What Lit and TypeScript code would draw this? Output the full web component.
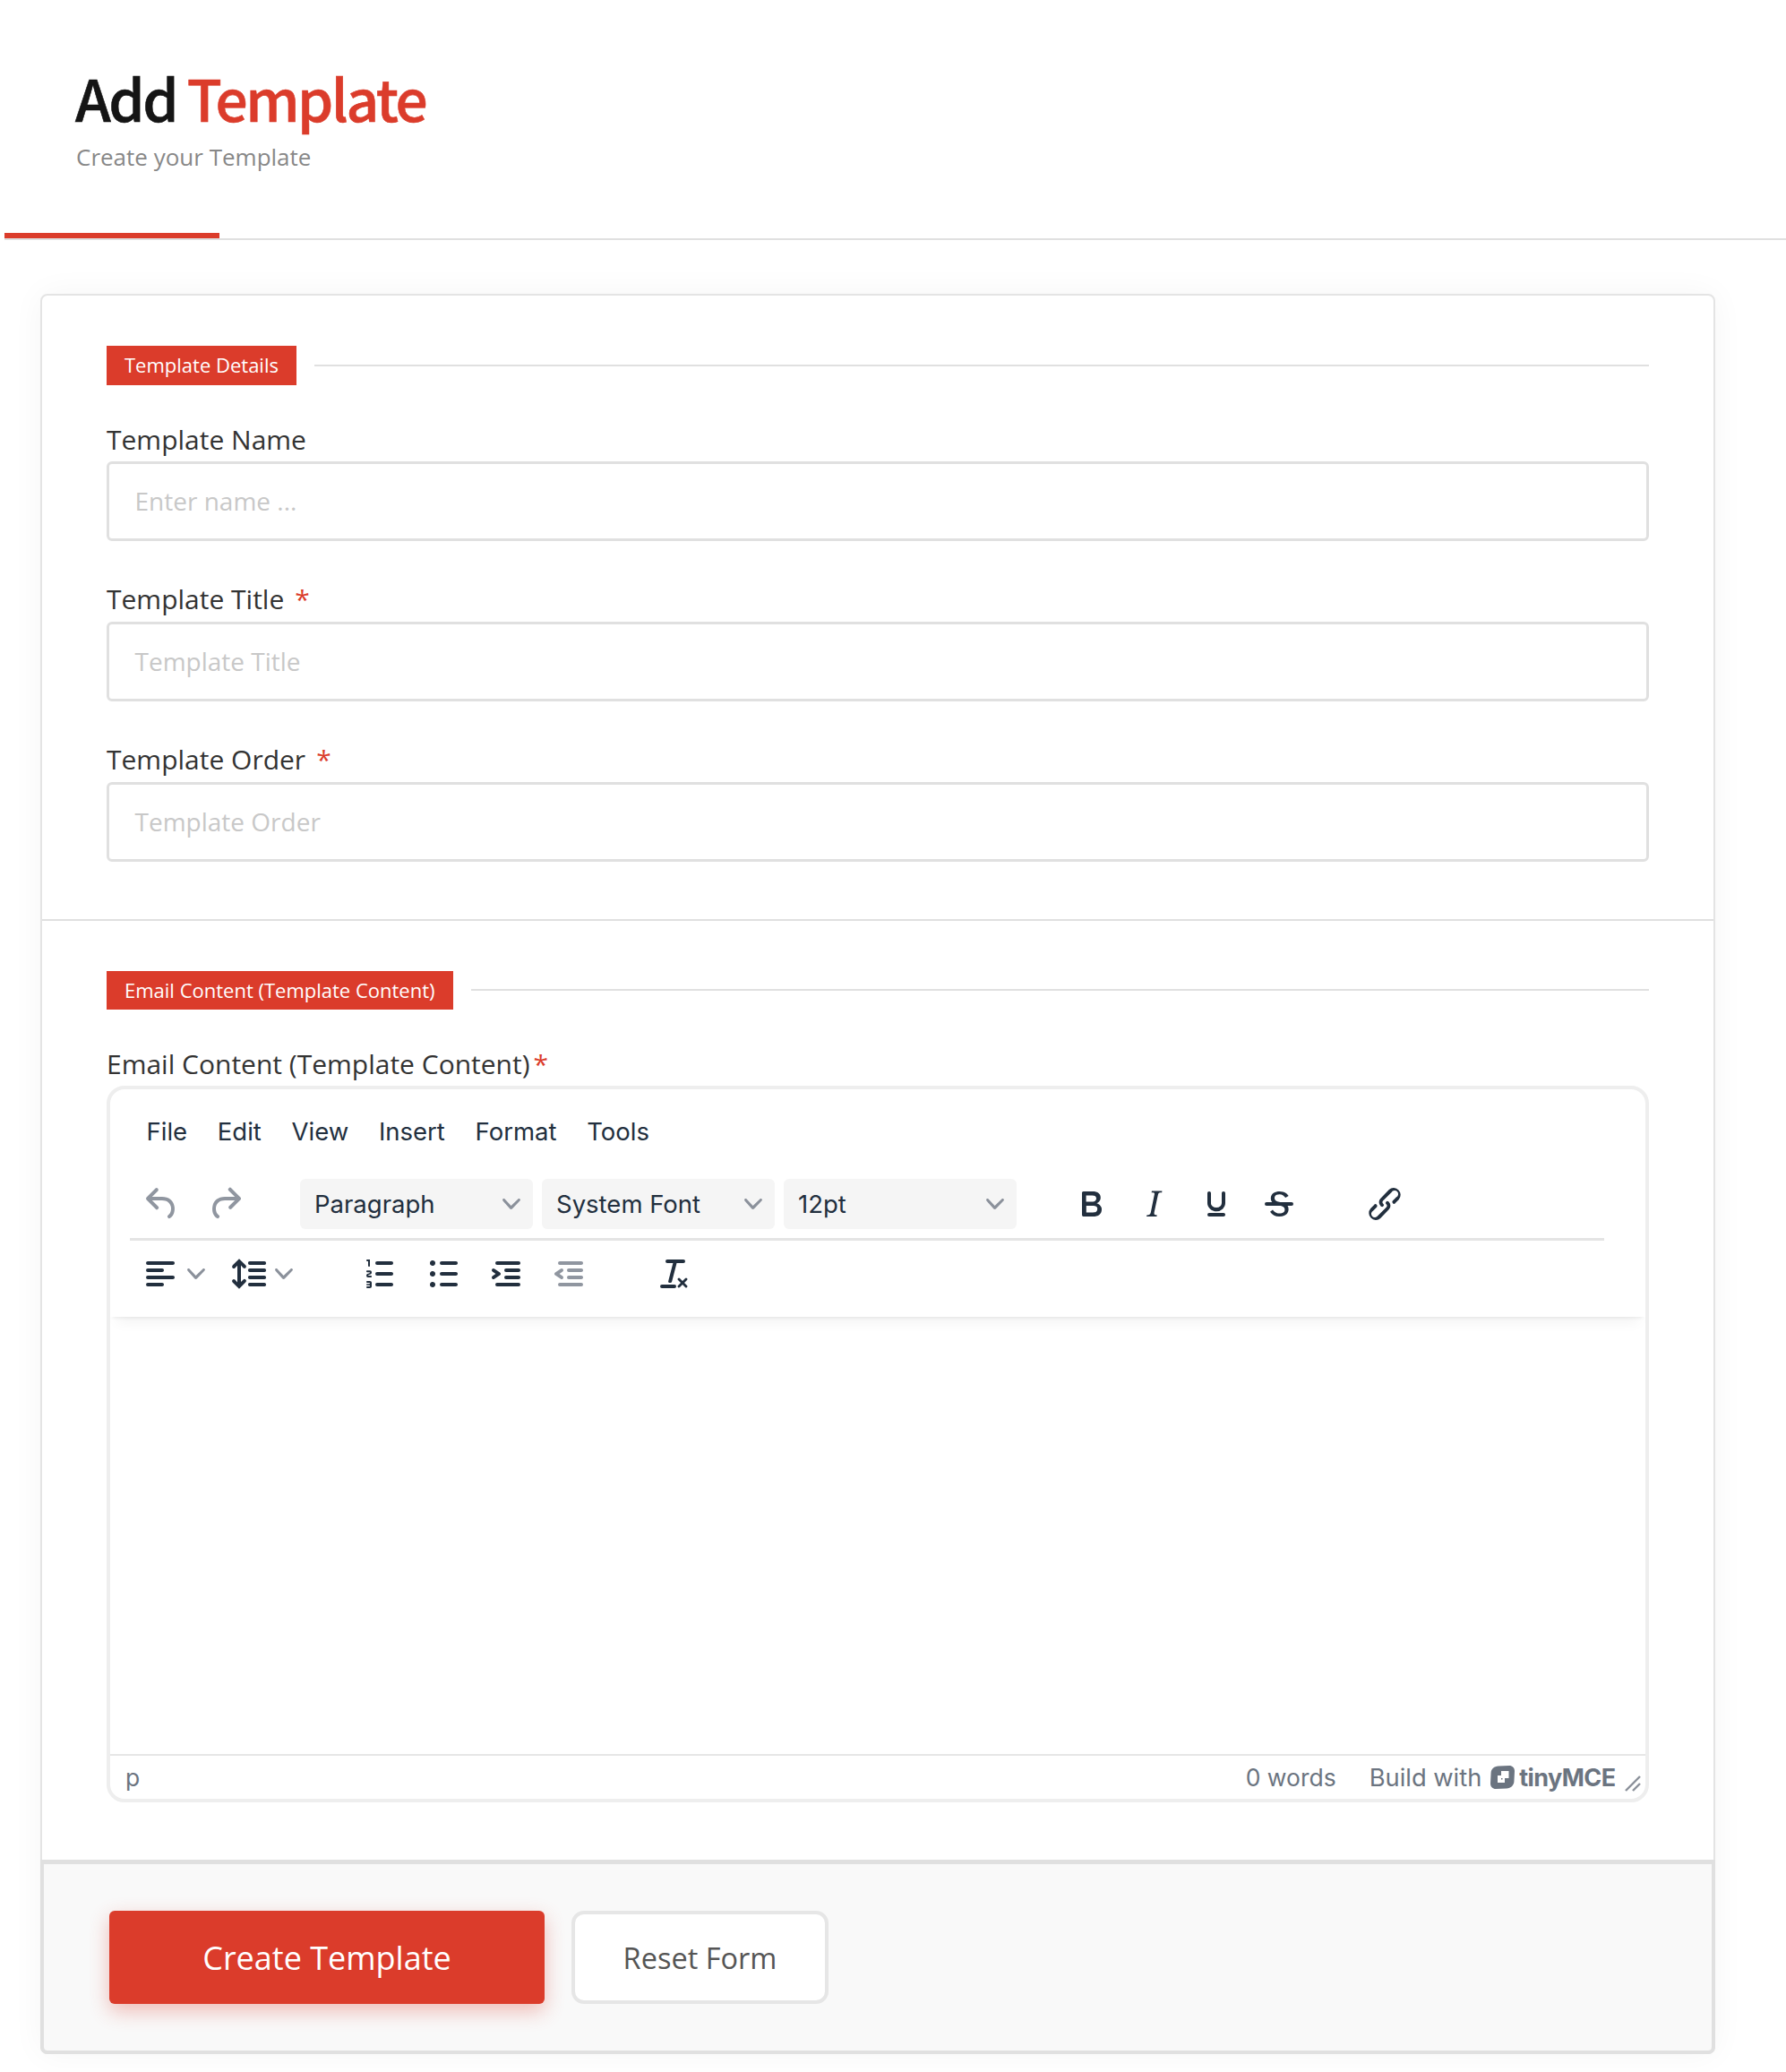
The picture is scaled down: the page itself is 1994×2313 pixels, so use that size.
import { LitElement, html, css, svg } from "lit";
import { customElement } from "lit/decorators.js";

const P: Record<string, string> = {
  undo: "M6.4 8H12c3.7 0 6.2 2 6.8 5.1.6 2.7-.4 5.6-2.3 6.8a1 1 0 01-1-1.8c1.1-.6 1.8-2.7 1.4-4.6-.5-2.1-2.1-3.5-4.9-3.5H6.4l3.3 3.3a1 1 0 11-1.4 1.4l-5-5a1 1 0 010-1.4l5-5a1 1 0 011.4 1.4L6.4 8z",
  redo: "M17.6 10H12c-2.8 0-4.4 1.4-4.9 3.5-.4 2 .3 4 1.4 4.6a1 1 0 11-1 1.8c-2-1.2-2.9-4.1-2.3-6.8.6-3 3-5.1 6.8-5.1h5.6l-3.3-3.3a1 1 0 111.4-1.4l5 5a1 1 0 010 1.4l-5 5a1 1 0 01-1.4-1.4l3.3-3.3z",
  bold: "M7.8 19c-.3 0-.5 0-.6-.2l-.2-.5V5.7c0-.2 0-.4.2-.5l.6-.2h5c1.5 0 2.7.3 3.5 1 .7.6 1.1 1.4 1.1 2.5a3 3 0 01-.6 1.9c-.4.6-1 1-1.6 1.2.4.1.9.3 1.3.6s.8.7 1 1.2c.4.4.5 1 .5 1.6 0 1.3-.4 2.3-1.3 3-.8.7-2.1 1-3.8 1H7.8zm5-8.3c.6 0 1.2-.1 1.6-.5.4-.3.6-.7.6-1.3 0-1.1-.8-1.7-2.3-1.7H9.3v3.5h3.4zm.5 6c.7 0 1.3-.1 1.7-.4.4-.4.6-.9.6-1.5s-.2-1-.7-1.4c-.4-.3-1-.4-2-.4H9.4v3.8h4z",
  italic: "M16.7 4.7l-.1.9h-.3c-.6 0-1 0-1.4.3-.3.3-.4.6-.5 1.1l-2.1 9.8v.6c0 .5.4.8 1.4.8h.2l-.2.8H8l.2-.8h.2c1.1 0 1.8-.5 2-1.5l2-9.8.1-.5c0-.6-.4-.8-1.4-.8h-.3l.2-.9h5.8z",
  underline: "M16 5c.6 0 1 .4 1 1v5.5a4 4 0 01-.4 1.8l-1 1.4a5.3 5.3 0 01-5.5 1 5 5 0 01-1.6-1c-.5-.4-.8-.9-1.1-1.4a4 4 0 01-.4-1.8V6c0-.6.4-1 1-1s1 .4 1 1v5.5c0 .3 0 .6.2 1l.6.7a3.3 3.3 0 002.2.8 3.4 3.4 0 002.2-.8c.3-.2.4-.5.6-.8l.2-.9V6c0-.6.4-1 1-1zM8 17h8c.6 0 1 .4 1 1s-.4 1-1 1H8a1 1 0 010-2z",
  strike: "M15.6 8.5c-.5-.7-1-1.1-1.3-1.3-.6-.4-1.3-.6-2-.6-2.7 0-2.8 1.7-2.8 2.1 0 1.6 1.8 2 3.2 2.3 4.4.9 4.6 2.8 4.6 3.9 0 1.4-.7 4.1-5 4.1A6.2 6.2 0 017 16.4l1.5-1.1c.4.6 1.6 2 3.5 2 1.5 0 2.6-.4 3-1.2.4-.8.3-2-.8-2.6-.7-.4-1.6-.7-2.9-1-1-.2-3.9-.8-3.9-3.6C7.4 6 9.9 5 12.3 5c2.9 0 4.5 1.5 5 2.5l-1.7 1zM5 11h14a1 1 0 010 2H5a1 1 0 010-2z",
  link: "M6.2 12.3a1 1 0 011.4 1.4l-2 2a2 2 0 102.6 2.8l4.8-4.8a1 1 0 000-1.4 1 1 0 111.4-1.3 2.9 2.9 0 010 4L9.6 20a3.9 3.9 0 01-5.5-5.5l2-2zm11.6-.6a1 1 0 01-1.4-1.4l2-2a2 2 0 10-2.6-2.8L11 10.3a1 1 0 000 1.4A1 1 0 119.6 13a2.9 2.9 0 010-4L14.4 4a3.9 3.9 0 015.5 5.5l-2 2z",
  align: "M5 5h14c.6 0 1 .4 1 1s-.4 1-1 1H5a1 1 0 110-2zm0 4h8c.6 0 1 .4 1 1s-.4 1-1 1H5a1 1 0 110-2zm0 8h8c.6 0 1 .4 1 1s-.4 1-1 1H5a1 1 0 010-2zm0-4h14c.6 0 1 .4 1 1s-.4 1-1 1H5a1 1 0 010-2z",
  lineheight: "M21 5a1 1 0 01.1 2H13a1 1 0 01-.1-2H21zm0 4a1 1 0 01.1 2H13a1 1 0 01-.1-2H21zm0 4a1 1 0 01.1 2H13a1 1 0 01-.1-2H21zm0 4a1 1 0 01.1 2H13a1 1 0 01-.1-2H21zM7 3.6l3.7 3.7a1 1 0 01-1.3 1.5h-.1L8 7.3v9.2l1.3-1.3a1 1 0 011.3 0h.1c.4.4.4 1 0 1.3v.1L7 20.4l-3.7-3.7a1 1 0 011.3-1.5h.1L6 16.7V7.4L4.7 8.7a1 1 0 01-1.3 0h-.1a1 1 0 010-1.3v-.1L7 3.6z",
  numlist: "M10 17h8c.6 0 1 .4 1 1s-.4 1-1 1h-8a1 1 0 010-2zm0-6h8c.6 0 1 .4 1 1s-.4 1-1 1h-8a1 1 0 010-2zm0-6h8c.6 0 1 .4 1 1s-.4 1-1 1h-8a1 1 0 110-2zM6 4v3.5c0 .3-.2.5-.5.5a.5.5 0 01-.5-.5V5h-.5a.5.5 0 010-1H6zm-1 8.8l.2.2h1.3c.3 0 .5.2.5.5s-.2.5-.5.5H4.9a1 1 0 01-.9-1V13c0-.4.3-.8.6-1l1.2-.4.2-.3a.2.2 0 00-.2-.2H4.5a.5.5 0 01-.5-.5c0-.3.2-.5.5-.5h1.6c.5 0 .9.4.9 1v.1c0 .4-.3.8-.6 1l-1.2.4-.2.3zM7 17v2c0 .6-.4 1-1 1H4.5a.5.5 0 010-1h1.2c.2 0 .3-.1.3-.3 0-.2-.1-.3-.3-.3H4.4a.4.4 0 110-.8h1.3c.2 0 .3-.1.3-.3 0-.2-.1-.3-.3-.3H4.5a.5.5 0 110-1H6c.6 0 1 .4 1 1z",
  bullist: "M11 5h8c.6 0 1 .4 1 1s-.4 1-1 1h-8a1 1 0 010-2zm0 6h8c.6 0 1 .4 1 1s-.4 1-1 1h-8a1 1 0 010-2zm0 6h8c.6 0 1 .4 1 1s-.4 1-1 1h-8a1 1 0 010-2zM4.5 6c0-.4.1-.8.4-1 .3-.4.7-.5 1.1-.5.4 0 .8.1 1 .4.4.3.5.7.5 1.1 0 .4-.1.8-.4 1-.3.4-.7.5-1.1.5-.4 0-.8-.1-1-.4-.4-.3-.5-.7-.5-1.1zm0 6c0-.4.1-.8.4-1 .3-.4.7-.5 1.1-.5.4 0 .8.1 1 .4.4.3.5.7.5 1.1 0 .4-.1.8-.4 1-.3.4-.7.5-1.1.5-.4 0-.8-.1-1-.4-.4-.3-.5-.7-.5-1.1zm0 6c0-.4.1-.8.4-1 .3-.4.7-.5 1.1-.5.4 0 .8.1 1 .4.4.3.5.7.5 1.1 0 .4-.1.8-.4 1-.3.4-.7.5-1.1.5-.4 0-.8-.1-1-.4-.4-.3-.5-.7-.5-1.1z",
  indent: "M7 5h12c.6 0 1 .4 1 1s-.4 1-1 1H7a1 1 0 110-2zm5 4h7c.6 0 1 .4 1 1s-.4 1-1 1h-7a1 1 0 010-2zm0 4h7c.6 0 1 .4 1 1s-.4 1-1 1h-7a1 1 0 010-2zm-5 4h12a1 1 0 010 2H7a1 1 0 010-2zm-2.6-3.8L6.2 12l-1.8-1.2a1 1 0 011.2-1.6l3 2a1 1 0 010 1.6l-3 2a1 1 0 11-1.2-1.6z",
  outdent: "M7 5h12c.6 0 1 .4 1 1s-.4 1-1 1H7a1 1 0 110-2zm5 4h7c.6 0 1 .4 1 1s-.4 1-1 1h-7a1 1 0 010-2zm0 4h7c.6 0 1 .4 1 1s-.4 1-1 1h-7a1 1 0 010-2zm-5 4h12a1 1 0 010 2H7a1 1 0 010-2zm1.6-3.8a1 1 0 01-1.2 1.6l-3-2a1 1 0 010-1.6l3-2a1 1 0 011.2 1.6L6.8 12l1.8 1.2z",
  clear: "M13.2 6a1 1 0 010 .2l-2.6 10a1 1 0 01-1 .8h-.2a.8.8 0 01-.8-1l2.6-10H8a1 1 0 110-2h9a1 1 0 010 2h-3.8zM5 18h7a1 1 0 010 2H5a1 1 0 010-2zm13 1.5L16.5 18 15 19.5a.7.7 0 01-1-1l1.5-1.5-1.5-1.5a.7.7 0 011-1l1.5 1.5 1.5-1.5a.7.7 0 011 1L17.5 17l1.5 1.5a.7.7 0 01-1 1z",
};

const icon = (n: string, off = false) => html`<svg class="ic ${off ? "off" : ""}" viewBox="0 0 24 24"><path d="${P[n]}"></path></svg>`;
const chev = () => html`<svg class="chev" viewBox="0 0 10 10"><path d="M8.7 2.2c.3-.3.8-.3 1 0 .4.2.4.7 0 1L5.4 7.8c-.3.3-.9.3-1.2 0L.2 3.2c-.2-.3-.2-.8 0-1 .3-.3.8-.3 1.1 0L4.8 6l3.9-3.8z"></path></svg>`;

@customElement("app-root")
export class AppRoot extends LitElement {
  static styles = css`
    :host { display: block; background: #fff; min-height: 2313px; font-family: "Open Sans", sans-serif; color: #333; }
    * { box-sizing: border-box; }
    .page-head { margin-left: 5px; height: 268px; border-bottom: 2px solid #e0e0e0; display: flex; flex-direction: column; position: relative; }
    .titles { padding: 64px 0 0 79px; flex: 1; }
    h1 { margin: 0; font-family: "Noto Sans CJK SC", "Open Sans", sans-serif; font-size: 64px; line-height: 88px; font-weight: 500; color: #151515; letter-spacing: -2.5px; -webkit-text-stroke: .6px currentColor; }
    h1 span { color: #db3c2b; }
    .sub { font-size: 26px; line-height: 36px; color: #888; padding-left: 1px; margin-top: 4.5px; }
    .tab { width: 240px; height: 6px; background: #db3c2b; }
    .card { width: 1870px; margin: 60px 0 0 45px; border: 2px solid #e4e4e4; border-radius: 8px; background: #fff; box-shadow: 0 0 36px rgba(0,0,0,.045); }
    .sec { padding: 56px 72px 64px; display: flex; flex-direction: column; }
    .sec + .sec { border-top: 2px solid #e0e0e0; }
    .sec-head { display: flex; align-items: center; gap: 20px; margin-bottom: 39px; }
    .badge { height: 43.5px; line-height: 43.5px; padding: 0 20px; background: #db3c2b; color: #fff; font-size: 22px; }
    .rule { flex: 1; height: 2px; background: #e0e0e0; }
    .field + .field { margin-top: 43px; }
    .field + .field label { height: 47px; }
    label { display: block; height: 46px; line-height: 44px; font-size: 30px; color: #333; }
    .req { color: #db3c2b; margin-left: 12px; }
    .req.tight { margin-left: 4px; }
    .input { height: 89px; border: 3px solid #e0e0e0; border-radius: 6px; padding: 0 28.5px; display: flex; align-items: center; font-size: 28px; color: #c8c8c8; }
    .editor { font-family: Inter, sans-serif; border: 4px solid #eee; border-radius: 20px; height: 800px; display: flex; flex-direction: column; overflow: hidden; color: #222f3e; }
    .ed-head { height: 254px; box-shadow: 0 4px 4px -3px rgba(0,0,0,.08), 0 14px 14px -8px rgba(0,0,0,.05); position: relative; display: flex; flex-direction: column; flex: none; }
    .menu { display: flex; gap: 33.7px; padding: 27px 0 0 40.5px; height: 100px; font-size: 27.5px; line-height: 40px; flex: none; }
    .row { display: flex; align-items: center; flex: none; }
    .row1 { height: 56px; padding-left: 34px; }
    .ic { width: 48px; height: 48px; fill: #222f3e; flex: none; }
    .ic.off { fill: #9096a0; }
    .grp { display: flex; gap: 22px; align-items: center; }
    .undo { margin-right: 60px; }
    .marks { margin: 0 70px 0 49px; }
    .sel { width: 260px; height: 56px; border-radius: 6px; background: #f5f5f5; display: flex; align-items: center; justify-content: space-between; padding: 0 14px 0 16px; font-size: 27.5px; margin-right: 10px; }
    .chev { width: 20px; height: 20px; fill: #8b919b; flex: none; }
    .sep { height: 3px; background: #e4e4e4; margin: 10px 46px 0 22px; flex: none; }
    .row2 { height: 56px; margin-top: 9px; padding-left: 32px; }
    .drop { display: flex; align-items: center; gap: 6px; }
    .d1 { margin-right: 24px; }
    .d2 { margin-right: 74px; }
    .lists { margin-right: 70px; }
    .body { flex: 1; }
    .status { height: 50px; border-top: 2px solid #e6e6e6; display: flex; align-items: center; padding: 0 5.5px 0 13px; font-size: 26.5px; color: #6b7480; flex: none; }
    .status .p { flex: 1; padding-left: 4px; }
    .words { margin-right: 37px; }
    .tiny { display: flex; align-items: center; gap: 10px; font-size: 27.3px; }
    .logo { width: 27px; height: 26px; }
    .tiny b { font-size: 27px; font-weight: 700; letter-spacing: -.6px; margin-left: -5px; }
    .grip { width: 18px; height: 18px; margin: 14px 0 0 10px; stroke: #8a9099; stroke-width: 2.4; fill: none; }
    .foot { margin: 0 -2px -2px; height: 217px; background: #f9f9f9; border: 4px solid #e0e0e0; border-top-width: 5px; border-radius: 0 0 8px 8px; padding: 52px 0 0 73px; display: flex; gap: 30px; }
    .btn { height: 104px; display: flex; align-items: center; justify-content: center; border-radius: 6px; }
    .create { width: 486px; background: #db3c2b; color: #fff; font-size: 36px; box-shadow: 0 8px 22px rgba(219,60,43,.32); }
    .reset { width: 287px; background: #fff; color: #555; font-size: 32.5px; border: 4px solid #e6e6e6; border-radius: 14px; }
  `;

  render() {
    return html`
      <div class="page-head">
        <div class="titles">
          <h1>Add <span>Template</span></h1>
          <div class="sub">Create your Template</div>
        </div>
        <div class="tab"></div>
      </div>
      <div class="card">
        <div class="sec">
          <div class="sec-head"><div class="badge">Template Details</div><div class="rule"></div></div>
          <div class="field"><label>Template Name</label><div class="input">Enter name ...</div></div>
          <div class="field"><label>Template Title<span class="req">*</span></label><div class="input">Template Title</div></div>
          <div class="field"><label>Template Order<span class="req">*</span></label><div class="input">Template Order</div></div>
        </div>
        <div class="sec">
          <div class="sec-head"><div class="badge">Email Content (Template Content)</div><div class="rule"></div></div>
          <label>Email Content (Template Content)<span class="req tight">*</span></label>
          <div class="editor">
            <div class="ed-head">
              <div class="menu"><span>File</span><span>Edit</span><span>View</span><span>Insert</span><span>Format</span><span>Tools</span></div>
              <div class="row row1">
                <div class="grp undo">${icon("undo", true)}${icon("redo", true)}</div>
                <div class="sel">Paragraph ${chev()}</div>
                <div class="sel">System Font ${chev()}</div>
                <div class="sel">12pt ${chev()}</div>
                <div class="grp marks">${icon("bold")}${icon("italic")}${icon("underline")}${icon("strike")}</div>
                ${icon("link")}
              </div>
              <div class="sep"></div>
              <div class="row row2">
                <div class="drop d1">${icon("align")}${chev()}</div>
                <div class="drop d2">${icon("lineheight")}${chev()}</div>
                <div class="grp lists">${icon("numlist")}${icon("bullist")}${icon("indent")}${icon("outdent", true)}</div>
                ${icon("clear")}
              </div>
            </div>
            <div class="body"></div>
            <div class="status">
              <span class="p">p</span>
              <span class="words">0 words</span>
              <span class="tiny">Build with
                <svg class="logo" viewBox="0 0 27 26"><path fill="#6b7480" fill-rule="evenodd" d="M9 0.6 L21 0 C24.5 0 27 2.5 27 6 L26.4 18 C26 22 23 25.4 18 25.4 L6 26 C2.5 26 0 23.5 0 20 L0.6 8 C1 3.5 4 1 9 0.6 Z M12 6 L20.5 6 L20.5 14 L16 14 L16 19 L8 19 L8 11 L12 11 Z M12 14 L12 15.5 L13.5 15.5 L13.5 14 Z"></path></svg>
                <b>tinyMCE</b></span>
              <svg class="grip" viewBox="0 0 18 18">${svg`<line x1="1" y1="17" x2="17" y2="1"></line><line x1="9" y1="17" x2="17" y2="9"></line>`}</svg>
            </div>
          </div>
        </div>
        <div class="foot">
          <div class="btn create">Create Template</div>
          <div class="btn reset">Reset Form</div>
        </div>
      </div>
    `;
  }
}
